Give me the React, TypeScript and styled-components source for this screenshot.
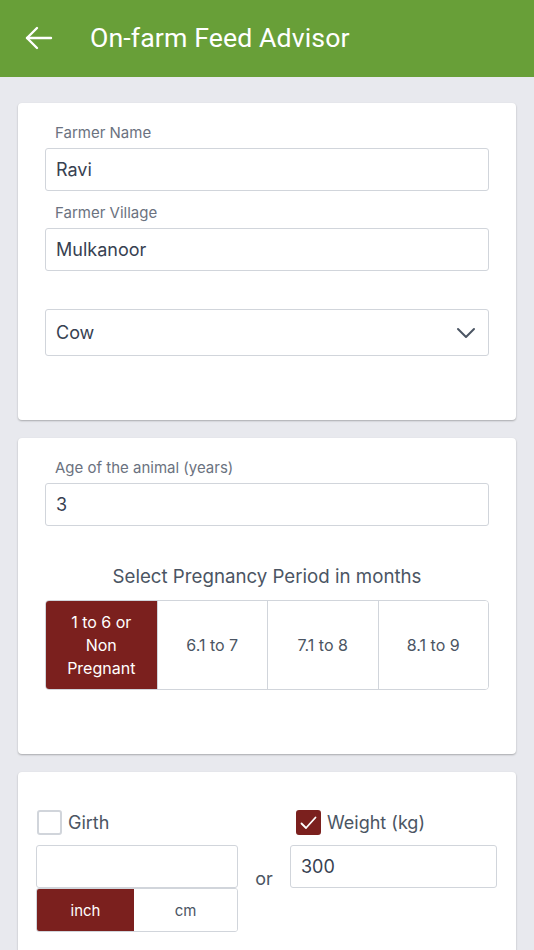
import React, { useState } from 'react';
import styled, { createGlobalStyle } from 'styled-components';

const GlobalStyle = createGlobalStyle`
  html, body {
    margin: 0;
    padding: 0;
    background: #e8e9ee;
  }
  * {
    box-sizing: border-box;
  }
`;

const Page = styled.div`
  display: flex;
  flex-direction: column;
  min-height: 950px;
  background: #e8e9ee;
  font-family: Inter, 'Noto Sans', sans-serif;
`;

const Header = styled.header`
  display: flex;
  align-items: center;
  height: 77px;
  padding: 0 0 2px 24px;
  background: #689f38;
  color: #ffffff;
`;

const BackButton = styled.button`
  display: flex;
  align-items: center;
  justify-content: center;
  width: 30px;
  height: 30px;
  padding: 0;
  border: none;
  background: none;
  color: #ffffff;
  cursor: pointer;
`;

const Title = styled.h1`
  margin: 0 0 0 36px;
  font-family: Roboto, 'Liberation Sans', sans-serif;
  font-size: 26.7px;
  font-weight: 400;
  letter-spacing: 0.1px;
`;

const Body = styled.main`
  display: flex;
  flex-direction: column;
  gap: 18px;
  padding: 26px 18px 0;
`;

const Card = styled.section<{ $pad?: string }>`
  display: flex;
  flex-direction: column;
  padding: ${({ $pad }) => $pad ?? '20px 27px 64px'};
  background: #ffffff;
  border-radius: 4px;
  box-shadow: 0 1px 2px rgba(0, 0, 0, 0.28);
`;

const Label = styled.label<{ $top?: number }>`
  display: block;
  margin: ${({ $top }) => $top ?? 0}px 0 5px 10px;
  font-size: 15px;
  line-height: 20px;
  color: #6b7280;
`;

const TextInput = styled.input`
  width: 100%;
  height: 43px;
  padding: 0 10px;
  border: 1px solid #d1d5db;
  border-radius: 3px;
  font-family: inherit;
  font-size: 18px;
  color: #374151;
  background: #ffffff;
  outline: none;
`;

const SelectBox = styled.div`
  display: flex;
  align-items: center;
  justify-content: space-between;
  height: 47px;
  margin-top: 38px;
  padding: 0 12px 0 10px;
  border: 1px solid #d1d5db;
  border-radius: 3px;
  font-size: 18px;
  color: #374151;
`;

const SectionTitle = styled.h2`
  margin: 40px 0 12px;
  font-size: 18.7px;
  font-weight: 400;
  line-height: 22px;
  text-align: center;
  color: #4b5563;
`;

const Segments = styled.div`
  display: grid;
  grid-template-columns: repeat(4, 1fr);
  height: 90px;
  border: 1px solid #d1d5db;
  border-radius: 4px;
  overflow: hidden;
`;

const Segment = styled.button<{ $active?: boolean }>`
  display: flex;
  align-items: center;
  justify-content: center;
  padding: 0 6px;
  border: none;
  border-left: 1px solid #d1d5db;
  background: ${({ $active }) => ($active ? '#7b201e' : '#ffffff')};
  color: ${({ $active }) => ($active ? '#ffffff' : '#4b5563')};
  font-family: inherit;
  font-size: 16px;
  line-height: 23px;
  cursor: pointer;

  &:first-child {
    border-left: none;
  }
`;

const MeasureRow = styled.div`
  display: grid;
  grid-template-columns: 202px 52px 207px;
  align-items: start;
`;

const Column = styled.div`
  display: flex;
  flex-direction: column;
`;

const CheckRow = styled.label<{ $indent?: number }>`
  display: flex;
  align-items: center;
  gap: 6px;
  height: 25px;
  margin: 0 0 10px ${({ $indent }) => $indent ?? 1}px;
  font-size: 18px;
  color: #4b5563;
`;

const CheckBox = styled.span<{ $checked?: boolean }>`
  display: flex;
  align-items: center;
  justify-content: center;
  width: 25px;
  height: 25px;
  border-radius: 3px;
  border: 2px solid ${({ $checked }) => ($checked ? '#7b201e' : '#d1d5db')};
  background: ${({ $checked }) => ($checked ? '#7b201e' : '#ffffff')};
`;

const Or = styled.span`
  align-self: start;
  margin-top: 58px;
  font-size: 18px;
  text-align: center;
  color: #4b5563;
`;

const UnitToggle = styled.div`
  display: grid;
  grid-template-columns: 97px 1fr;
  height: 44px;
  border: 1px solid #d1d5db;
  border-radius: 3px;
  overflow: hidden;
`;

const Unit = styled.button<{ $active?: boolean }>`
  border: none;
  background: ${({ $active }) => ($active ? '#7b201e' : '#ffffff')};
  color: ${({ $active }) => ($active ? '#ffffff' : '#4b5563')};
  font-family: inherit;
  font-size: 15px;
  cursor: pointer;
`;

const periods = [
  { id: 'p1', label: ['1 to 6 or', 'Non', 'Pregnant'] },
  { id: 'p2', label: ['6.1 to 7'] },
  { id: 'p3', label: ['7.1 to 8'] },
  { id: 'p4', label: ['8.1 to 9'] },
];

export default function App() {
  const [period, setPeriod] = useState('p1');
  const [unit, setUnit] = useState('inch');

  return (
    <Page>
      <GlobalStyle />
      <Header>
        <BackButton aria-label="Back">
          <svg width="30" height="30" viewBox="0 0 30 30" fill="none" stroke="currentColor" strokeWidth="2.4" strokeLinecap="round" strokeLinejoin="round">
            <path d="M27 15H3" />
            <path d="M13 5L3 15l10 10" />
          </svg>
        </BackButton>
        <Title>On-farm Feed Advisor</Title>
      </Header>

      <Body>
        <Card>
          <Label>Farmer Name</Label>
          <TextInput defaultValue="Ravi" />
          <Label $top={12}>Farmer Village</Label>
          <TextInput defaultValue="Mulkanoor" />
          <SelectBox>
            <span>Cow</span>
            <svg width="20" height="12" viewBox="0 0 20 12" fill="none" stroke="#4b5563" strokeWidth="2" strokeLinecap="round" strokeLinejoin="round">
              <path d="M2 2l8 8 8-8" />
            </svg>
          </SelectBox>
        </Card>

        <Card>
          <Label>Age of the animal (years)</Label>
          <TextInput defaultValue="3" />
          <SectionTitle>Select Pregnancy Period in months</SectionTitle>
          <Segments>
            {periods.map((p) => (
              <Segment key={p.id} $active={period === p.id} onClick={() => setPeriod(p.id)}>
                <span>
                  {p.label.map((line, i) => (
                    <React.Fragment key={line}>
                      {i > 0 && <br />}
                      {line}
                    </React.Fragment>
                  ))}
                </span>
              </Segment>
            ))}
          </Segments>
        </Card>

        <Card $pad="38px 18px 40px">
          <MeasureRow>
            <Column>
              <CheckRow>
                <CheckBox />
                Girth
              </CheckRow>
              <TextInput />
              <UnitToggle>
                <Unit $active={unit === 'inch'} onClick={() => setUnit('inch')}>inch</Unit>
                <Unit $active={unit === 'cm'} onClick={() => setUnit('cm')}>cm</Unit>
              </UnitToggle>
            </Column>
            <Or>or</Or>
            <Column>
              <CheckRow $indent={6}>
                <CheckBox $checked>
                  <svg width="17" height="14" viewBox="0 0 17 14" fill="none" stroke="#ffffff" strokeWidth="1.8" strokeLinecap="round" strokeLinejoin="round">
                    <path d="M1.5 7.5l4.5 4.5L15.5 1.5" />
                  </svg>
                </CheckBox>
                Weight (kg)
              </CheckRow>
              <TextInput defaultValue="300" />
            </Column>
          </MeasureRow>
        </Card>
      </Body>
    </Page>
  );
}
